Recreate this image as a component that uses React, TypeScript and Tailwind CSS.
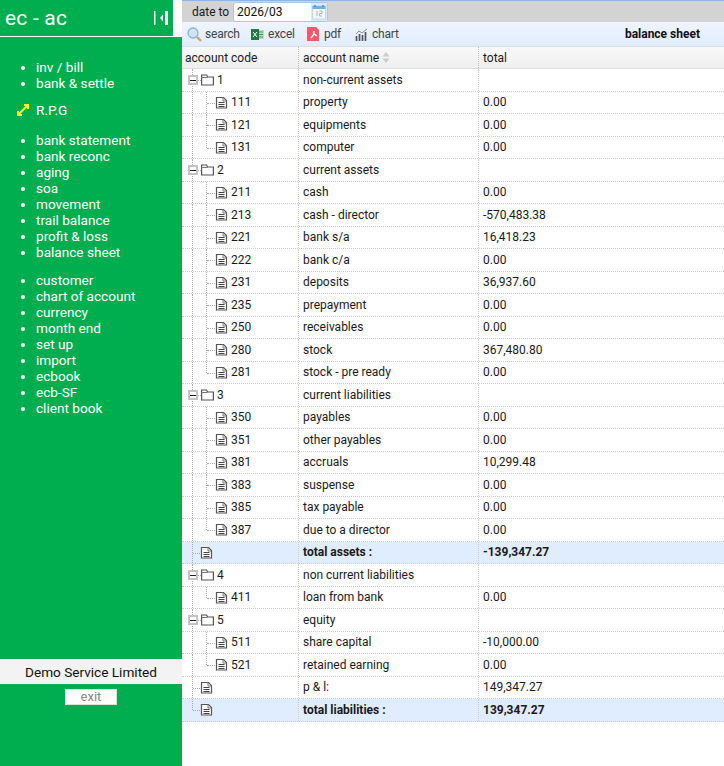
const sideGroups = [
  ["inv / bill", "bank & settle"],
  ["bank statement", "bank reconc", "aging", "soa", "movement", "trail balance", "profit & loss", "balance sheet"],
  ["customer", "chart of account", "currency", "month end", "set up", "import", "ecbook", "ecb-SF", "client book"],
];

type Row = {
  kind: "folder" | "leaf" | "top";
  code?: string;
  name: string;
  total?: string;
  bold?: boolean;
  last?: boolean;
};

const rows: Row[] = [
  { kind: "folder", code: "1", name: "non-current assets" },
  { kind: "leaf", code: "111", name: "property", total: "0.00" },
  { kind: "leaf", code: "121", name: "equipments", total: "0.00" },
  { kind: "leaf", code: "131", name: "computer", total: "0.00", last: true },
  { kind: "folder", code: "2", name: "current assets" },
  { kind: "leaf", code: "211", name: "cash", total: "0.00" },
  { kind: "leaf", code: "213", name: "cash - director", total: "-570,483.38" },
  { kind: "leaf", code: "221", name: "bank s/a", total: "16,418.23" },
  { kind: "leaf", code: "222", name: "bank c/a", total: "0.00" },
  { kind: "leaf", code: "231", name: "deposits", total: "36,937.60" },
  { kind: "leaf", code: "235", name: "prepayment", total: "0.00" },
  { kind: "leaf", code: "250", name: "receivables", total: "0.00" },
  { kind: "leaf", code: "280", name: "stock", total: "367,480.80" },
  { kind: "leaf", code: "281", name: "stock - pre ready", total: "0.00", last: true },
  { kind: "folder", code: "3", name: "current liabilities" },
  { kind: "leaf", code: "350", name: "payables", total: "0.00" },
  { kind: "leaf", code: "351", name: "other payables", total: "0.00" },
  { kind: "leaf", code: "381", name: "accruals", total: "10,299.48" },
  { kind: "leaf", code: "383", name: "suspense", total: "0.00" },
  { kind: "leaf", code: "385", name: "tax payable", total: "0.00" },
  { kind: "leaf", code: "387", name: "due to a director", total: "0.00", last: true },
  { kind: "top", name: "total assets :", total: "-139,347.27", bold: true },
  { kind: "folder", code: "4", name: "non current liabilities" },
  { kind: "leaf", code: "411", name: "loan from bank", total: "0.00", last: true },
  { kind: "folder", code: "5", name: "equity" },
  { kind: "leaf", code: "511", name: "share capital", total: "-10,000.00" },
  { kind: "leaf", code: "521", name: "retained earning", total: "0.00", last: true },
  { kind: "top", name: "p & l:", total: "149,347.27" },
  { kind: "top", name: "total liabilities :", total: "139,347.27", bold: true, last: true },
];

function PageIcon() {
  return (
    <svg width="13" height="13" viewBox="0 0 13 13" className="shrink-0">
      <path d="M1.5 1.5h7l3 3v7.5h-10z" fill="#fff" stroke="#555" strokeWidth="1.2" />
      <path d="M8 1.5v3.5h3.5" fill="none" stroke="#777" />
      <path d="M3.5 6.5h6M3.5 8.5h6M3.5 10.5h6" stroke="#444" />
    </svg>
  );
}

function FolderIcon() {
  return (
    <svg width="13" height="13" viewBox="0 0 13 13" className="shrink-0">
      <path d="M.6 12V2h5l1 2h5.8v8z" fill="#fff" stroke="#555" strokeWidth="1.2" />
      <path d="M.6 4.5h6" stroke="#777" />
    </svg>
  );
}

function TreeCell({ row }: { row: Row }) {
  if (row.kind === "folder") {
    return (
      <div className="flex items-center h-full">
        <div className="relative w-[19px] h-full shrink-0">
          <span className="absolute left-[10px] top-0 bottom-0 border-l border-dotted border-[#aaa]" />
          <span className="absolute left-[14px] top-[11px] w-[5px] border-t border-dotted border-[#aaa]" />
          <span className="absolute left-[6px] top-[6px] w-[10px] h-[10px] bg-white border-2 border-[#c4c4c4] flex items-center justify-center">
            <span className="w-[6px] h-px bg-[#222]" />
          </span>
        </div>
        <FolderIcon />
        <span className="ml-[3px]">{row.code}</span>
      </div>
    );
  }
  if (row.kind === "leaf") {
    return (
      <div className="flex items-center h-full">
        <div className="relative w-[33px] h-full shrink-0">
          <span className="absolute left-[10px] top-0 bottom-0 border-l border-dotted border-[#aaa]" />
          <span className={"absolute left-[24px] top-0 border-l border-dotted border-[#aaa] " + (row.last ? "h-[11px]" : "bottom-0")} />
          <span className="absolute left-[25px] top-[11px] w-[8px] border-t border-dotted border-[#aaa]" />
        </div>
        <PageIcon />
        <span className="ml-[3px]">{row.code}</span>
      </div>
    );
  }
  return (
    <div className="flex items-center h-full">
      <div className="relative w-[18px] h-full shrink-0">
        <span className={"absolute left-[10px] top-0 border-l border-dotted border-[#aaa] " + (row.last ? "h-[11px]" : "bottom-0")} />
        <span className="absolute left-[11px] top-[11px] w-[7px] border-t border-dotted border-[#aaa]" />
      </div>
      <PageIcon />
    </div>
  );
}

export default function App() {
  return (
    <div className="flex w-[724px] h-[766px] overflow-hidden bg-white text-[12px] text-[#1a1a1a] [font-family:Roboto,sans-serif]">
      <aside className="w-[182px] shrink-0 bg-[#00ae50] text-white flex flex-col text-[13.6px] leading-[16px]">
        <div className="h-[37px] bg-white">
          <div className="flex items-center justify-between w-[173px] h-[37px] bg-[#00ae50] border-b border-white pl-[5px] pr-[5px]">
            <span className="text-[21px] tracking-[0.2px]">ec - ac</span>
            <svg width="14" height="14" viewBox="0 0 14 14">
              <path d="M.7 0v14" stroke="#fff" strokeWidth="1.5" />
              <path d="M11 0h3v14h-3z" fill="#fff" />
              <path d="M9 3.5v7L6 7z" fill="#fff" />
            </svg>
          </div>
        </div>
        <ul className="list-disc pl-[36px] mt-[22px]">
          {sideGroups[0].map((s) => <li key={s}>{s}</li>)}
        </ul>
        <div className="flex items-center gap-[7px] pl-[17px] mt-[11px] h-[16px]">
          <svg width="12" height="12" viewBox="0 0 12 12">
            <path d="M1 11l10-10M7 1h4v4M1 7v4h4" stroke="#ffff00" strokeWidth="2" fill="none" />
          </svg>
          <span>R.P.G</span>
        </div>
        <ul className="list-disc pl-[36px] mt-[14px]">
          {sideGroups[1].map((s) => <li key={s}>{s}</li>)}
        </ul>
        <ul className="list-disc pl-[36px] mt-[12px]">
          {sideGroups[2].map((s) => <li key={s}>{s}</li>)}
        </ul>
        <div className="mt-auto mb-[61px] flex flex-col items-center">
          <div className="w-full h-[25px] bg-[#f3f3f3] text-[#111] flex items-center justify-center">Demo Service Limited</div>
          <div className="mt-[5px] w-[52px] h-[16px] bg-white border border-[#ddd] text-[#888] text-[13px] flex items-center justify-center">exit</div>
        </div>
      </aside>

      <main className="flex-1 min-w-0 flex flex-col">
        <div className="h-[22px] bg-[#d3d3d3] border-t border-[#8fb4e3] flex items-center pl-[10px] gap-[4px] text-[12px]">
          <span className="w-[37px] whitespace-nowrap">date to</span>
          <div className="w-[95px] h-[20px] bg-white border border-[#a9c6ee] rounded-[3px] flex items-center justify-between pl-[3px] pr-0">
            <span className="text-[12px] text-[#111]">2026/03</span>
            <svg width="16" height="18" viewBox="0 0 16 18">
              <rect x="0" y="0" width="16" height="18" fill="#dbe8f8" />
              <rect x="1.5" y="3" width="13" height="13" fill="#f4f6f7" stroke="#c8d8e4" />
              <rect x="1.5" y="3" width="13" height="3" fill="#6fb2e6" />
              <path d="M4 2v2M12 2v2" stroke="#4a8cc4" strokeWidth="1.5" />
              <path d="M6 8v5M8.5 8h2.5v2.5h-2.5v2.5h2.5" stroke="#a8b6bd" fill="none" />
            </svg>
          </div>
        </div>

        <div className="h-[24px] flex items-center bg-gradient-to-b from-[#eff5ff] to-[#e0ecff] pl-[5px] pr-[24px] text-[#444] tracking-[-0.2px]">
          <svg width="15" height="15" viewBox="0 0 15 15" className="mr-[3px]">
            <circle cx="6" cy="6" r="5" fill="#cfe4f7" stroke="#8db2d6" strokeWidth="1.3" />
            <path d="M10 10l4 4" stroke="#d2a468" strokeWidth="2.4" />
          </svg>
          <span className="w-[46px]">search</span>
          <svg width="13" height="13" viewBox="0 0 13 13" className="mr-[4px]">
            <rect x="5" y="2" width="8" height="9" fill="#bcdcc6" />
            <path d="M8 4h4M8 6.5h4M8 9h4" stroke="#3a9a5c" />
            <rect x="0" y="1" width="8" height="11" fill="#1f7a3f" />
            <path d="M2 4l4 5M6 4L2 9" stroke="#fff" />
          </svg>
          <span className="w-[39px]">excel</span>
          <svg width="12" height="14" viewBox="0 0 12 14" className="mr-[5px]">
            <path d="M0 0h9l3 3v11H0z" fill="#f8566a" />
            <path d="M4 11l3-4 3 2M7 7V4" stroke="#fff" strokeWidth="1.4" fill="none" />
          </svg>
          <span className="w-[31px]">pdf</span>
          <svg width="13" height="13" viewBox="0 0 13 13" className="mr-[4px]">
            <path d="M1.5 13V8M4.5 13V6M7.5 13V7M10.5 13V4" stroke="#555" strokeWidth="1.7" />
            <path d="M1 6l3-3 3 2 5-4" stroke="#888" fill="none" />
          </svg>
          <span>chart</span>
          <span className="ml-auto font-bold text-[#111] tracking-normal">balance sheet</span>
        </div>

        <div className="h-[23px] flex bg-gradient-to-b from-[#f9f9f9] to-[#efefef] border-y border-[#ddd]">
          <div className="w-[116px] pl-[3px] flex items-center">account code</div>
          <div className="w-[180px] pl-[4px] flex items-center gap-[3px] border-l border-dotted border-[#bbb]">
            account name
            <svg width="8" height="11" viewBox="0 0 8 11">
              <path d="M4 0l3.5 4.5h-7zM4 11L.5 6.5h7z" fill="#ccc" />
            </svg>
          </div>
          <div className="flex-1 pl-[4px] flex items-center border-l border-dotted border-[#bbb]">total</div>
        </div>

        <div className="flex flex-col">
          {rows.map((r, i) => (
            <div
              key={i}
              className={"h-[22.5px] flex border-b border-dotted border-[#ccc] " + (r.bold ? "bg-[#e0ecff] font-bold" : "")}
            >
              <div className="w-[116px] font-normal">
                <TreeCell row={r} />
              </div>
              <div className="w-[180px] pl-[4px] flex items-center border-l border-dotted border-[#ccc]">{r.name}</div>
              <div className="flex-1 pl-[4px] flex items-center border-l border-dotted border-[#ccc]">{r.total}</div>
            </div>
          ))}
        </div>
      </main>
    </div>
  );
}
